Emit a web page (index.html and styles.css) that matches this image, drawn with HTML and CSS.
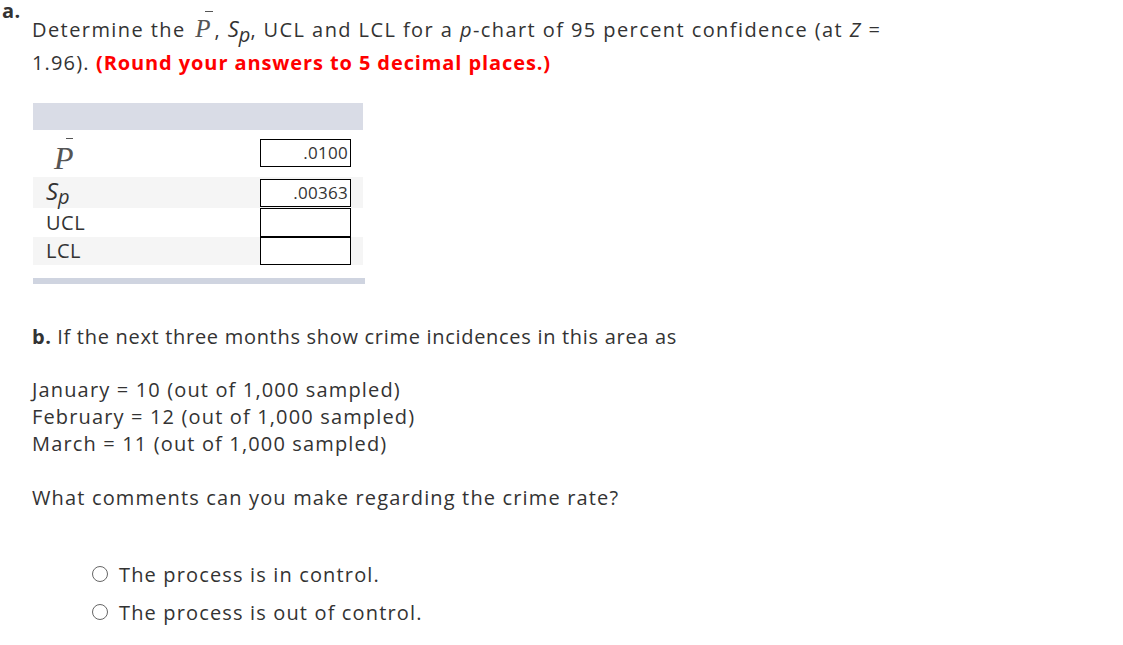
FILE: index.html
```html
<!DOCTYPE html>
<html>
<head>
<meta charset="utf-8">
<link rel="stylesheet" href="styles.css">
</head>
<body>
<div class="page">
  <div class="part-label">a.</div>
  <p class="intro"><span class="line1">Determine the <span class="pbar">P</span>, <span class="sp">S<sub>p</sub></span>, UCL and LCL for a <i>p</i>-chart of 95 percent confidence (at <i>Z</i> =</span><br>1.96). <b class="red">(Round your answers to 5 decimal places.)</b></p>

  <div class="grid-wrap">
    <div class="answers">
      <div class="head"></div>
      <div class="row row-p">
        <div class="lbl"><span class="pbar pbar-lg">P</span></div>
        <div class="val"><span class="box">.0100</span></div>
      </div>
      <div class="row row-sp alt">
        <div class="lbl"><span class="sp sp-lg">S<sub>p</sub></span></div>
        <div class="val"><span class="box">.00363</span></div>
      </div>
      <div class="row row-ucl">
        <div class="lbl">UCL</div>
        <div class="val"><span class="box"></span></div>
      </div>
      <div class="row row-lcl alt">
        <div class="lbl">LCL</div>
        <div class="val"><span class="box"></span></div>
      </div>
    </div>
    <div class="bottom-bar"></div>
  </div>

  <p class="part-b"><b class="b-label">b.</b> If the next three months show crime incidences in this area as</p>
  <p class="months">January = 10 (out of 1,000 sampled)<br>February = 12 (out of 1,000 sampled)<br>March = 11 (out of 1,000 sampled)</p>
  <p class="question">What comments can you make regarding the crime rate?</p>

  <ul class="options">
    <li><span class="radio"></span>The process is in control.</li>
    <li><span class="radio"></span>The process is out of control.</li>
  </ul>
</div>
</body>
</html>
```
FILE: styles.css
```css
html, body {
  margin: 0;
  padding: 0;
  background: #fff;
}
body {
  font-family: "Open Sans", "Liberation Sans", sans-serif;
  font-size: 20px;
  letter-spacing: 1.15px;
  color: #333;
}
.page {
  padding: 1px 0 0 2px;
}
.part-label {
  font-weight: bold;
  font-size: 20px;
  letter-spacing: 0.5px;
  line-height: 20px;
  margin: 0;
}
.intro {
  margin: -9px 0 0 30px;
  line-height: 33px;
  white-space: nowrap;
}
.line1 {
  letter-spacing: 1.42px;
}
.red {
  color: #f00;
  letter-spacing: 0.9px;
}
.pbar {
  position: relative;
  display: inline-block;
  font-family: "Liberation Serif", serif;
  font-style: italic;
  font-size: 25px;
  line-height: 20px;
  letter-spacing: 0;
  color: #555;
  padding: 0 4px 0 3px;
}
.pbar::before {
  content: "";
  position: absolute;
  left: 13px;
  top: -8px;
  width: 8px;
  height: 1px;
  background: #555;
}
.sp {
  font-style: italic;
  font-size: 22px;
  letter-spacing: 0;
}
.sp sub {
  font-size: 20px;
  line-height: 0;
  vertical-align: -5px;
}
.grid-wrap {
  margin: 24px 0 0 31px;
  width: 332px;
}
.answers {
  width: 330px;
}
.head {
  background: #d9dce6;
  height: 27px;
}
.row {
  display: flex;
  align-items: center;
  justify-content: space-between;
}
.lbl {
  padding-left: 13px;
  line-height: 1;
  letter-spacing: 0.5px;
}
.val {
  padding-right: 12px;
  display: flex;
}
.alt {
  background: #f5f5f5;
}
.row-p {
  height: 47px;
  align-items: flex-start;
}
.row-p .val { padding-top: 9px; }
.row-p .lbl { padding-top: 18px; }
.row-sp { height: 31px; }
.row-sp .lbl { padding-bottom: 4px; }
.row-ucl { height: 29px; }
.row-lcl { height: 28px; }
.pbar-lg {
  font-size: 32px;
  margin-left: 5px;
}
.pbar-lg::before {
  left: 15px;
  top: -10px;
  width: 7px;
}
.sp-lg {
  font-size: 24px;
}
.sp-lg sub {
  vertical-align: -4px;
}
.box {
  display: block;
  box-sizing: border-box;
  width: 91px;
  height: 28px;
  border: 1px solid #000;
  background: #fff;
  font-size: 17px;
  letter-spacing: 0.3px;
  line-height: 26px;
  text-align: right;
  padding-right: 2px;
}
.row-ucl .box { height: 29px; }
.row-lcl .box { height: 28px; }
.bottom-bar {
  height: 6px;
  background: #cfd4e0;
  margin-top: 13px;
}
.part-b {
  margin: 39px 0 0 30px;
  line-height: 27px;
  letter-spacing: 0.7px;
}
.b-label {
  letter-spacing: 0.5px;
}
.months {
  margin: 26px 0 0 30px;
  line-height: 27px;
}
.question {
  margin: 27px 0 0 30px;
  line-height: 27px;
}
.options {
  list-style: none;
  margin: 44px 0 0 90px;
  padding: 0;
}
.options li {
  display: flex;
  align-items: center;
  height: 38px;
}
.radio {
  display: inline-block;
  width: 16px;
  height: 16px;
  border: 1px solid #666;
  border-radius: 50%;
  margin-right: 11px;
  box-sizing: border-box;
}
```
